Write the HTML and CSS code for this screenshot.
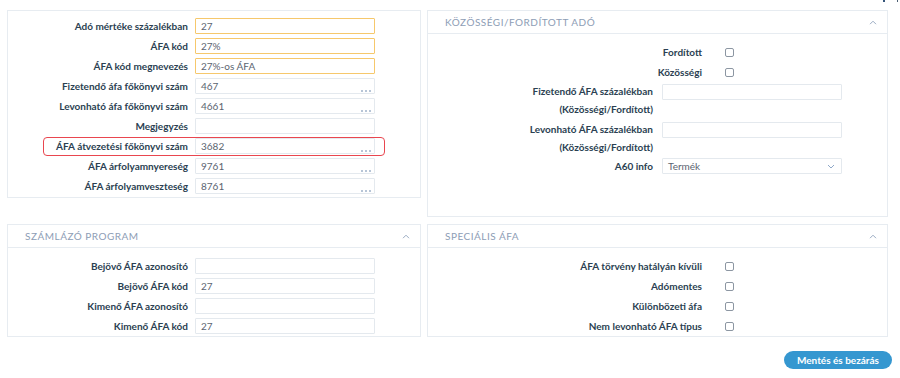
FILE: index.html
```html
<!DOCTYPE html>
<html lang="hu">
<head>
<meta charset="utf-8">
<title>ÁFA kód</title>
<link rel="stylesheet" href="styles.css">
</head>
<body>
<div class="corner"><span class="c1"></span><span class="c2"></span></div>
<div class="page">
  <div class="grid">
    <section class="panel panel-main">
      <div class="rows">
        <div class="row"><label class="lbl">Adó mértéke százalékban</label><div class="inp hl">27</div></div>
        <div class="row"><label class="lbl">ÁFA kód</label><div class="inp hl">27%</div></div>
        <div class="row"><label class="lbl">ÁFA kód megnevezés</label><div class="inp hl">27%-os ÁFA</div></div>
        <div class="row"><label class="lbl">Fizetendő áfa főkönyvi szám</label><div class="inp">467<span class="dots"><i></i><i></i><i></i></span></div></div>
        <div class="row"><label class="lbl">Levonható áfa főkönyvi szám</label><div class="inp">4661<span class="dots"><i></i><i></i><i></i></span></div></div>
        <div class="row"><label class="lbl">Megjegyzés</label><div class="inp"></div></div>
        <div class="row marked"><label class="lbl">ÁFA átvezetési főkönyvi szám</label><div class="inp">3682<span class="dots"><i></i><i></i><i></i></span></div></div>
        <div class="row"><label class="lbl">ÁFA árfolyamnyereség</label><div class="inp">9761<span class="dots"><i></i><i></i><i></i></span></div></div>
        <div class="row"><label class="lbl">ÁFA árfolyamveszteség</label><div class="inp">8761<span class="dots"><i></i><i></i><i></i></span></div></div>
      </div>
    </section>

    <section class="panel">
      <header class="phead"><span>Közösségi/fordított adó</span><svg class="caret" width="8" height="5" viewBox="0 0 8 5"><polyline points="1,4.2 4,1.2 7,4.2" fill="none" stroke="#9aabc2" stroke-width="1"/></svg></header>
      <div class="pbody pbody-kozos">
        <div class="crow"><span class="clbl">Fordított</span><span class="cb"></span></div>
        <div class="crow"><span class="clbl">Közösségi</span><span class="cb"></span></div>
        <div class="rrow"><span class="rlbl">Fizetendő ÁFA százalékban<br>(Közösségi/Fordított)</span><div class="inp inp-r"></div></div>
        <div class="rrow"><span class="rlbl">Levonható ÁFA százalékban<br>(Közösségi/Fordított)</span><div class="inp inp-r"></div></div>
        <div class="rrow"><span class="rlbl">A60 info</span><div class="inp inp-r sel">Termék<svg class="dd" width="8" height="5" viewBox="0 0 8 5"><polyline points="1,1 4,4 7,1" fill="none" stroke="#8fa8c8" stroke-width="1"/></svg></div></div>
      </div>
    </section>

    <section class="panel">
      <header class="phead"><span>Számlázó program</span><svg class="caret" width="8" height="5" viewBox="0 0 8 5"><polyline points="1,4.2 4,1.2 7,4.2" fill="none" stroke="#9aabc2" stroke-width="1"/></svg></header>
      <div class="pbody pbody-szamla">
        <div class="rows">
          <div class="row"><label class="lbl">Bejövő ÁFA azonosító</label><div class="inp"></div></div>
          <div class="row"><label class="lbl">Bejövő ÁFA kód</label><div class="inp">27</div></div>
          <div class="row"><label class="lbl">Kimenő ÁFA azonosító</label><div class="inp"></div></div>
          <div class="row"><label class="lbl">Kimenő ÁFA kód</label><div class="inp">27</div></div>
        </div>
      </div>
    </section>

    <section class="panel">
      <header class="phead"><span>Speciális ÁFA</span><svg class="caret" width="8" height="5" viewBox="0 0 8 5"><polyline points="1,4.2 4,1.2 7,4.2" fill="none" stroke="#9aabc2" stroke-width="1"/></svg></header>
      <div class="pbody pbody-spec">
        <div class="crow"><span class="clbl">ÁFA törvény hatályán kívüli</span><span class="cb"></span></div>
        <div class="crow"><span class="clbl">Adómentes</span><span class="cb"></span></div>
        <div class="crow"><span class="clbl">Különbözeti áfa</span><span class="cb"></span></div>
        <div class="crow"><span class="clbl">Nem levonható ÁFA típus</span><span class="cb"></span></div>
      </div>
    </section>
  </div>
  <div class="footer"><button class="btn">Mentés és bezárás</button></div>
</div>
</body>
</html>
```

FILE: styles.css
```css
* { box-sizing: border-box; }
html, body { margin: 0; padding: 0; background: #fff; }
body {
  font-family: Lato, "Open Sans", "Liberation Sans", sans-serif;
  font-size: 10px;
  color: #2b3f52;
  width: 900px;
  height: 378px;
  overflow: hidden;
  position: relative;
}
.corner { position: absolute; top: 0; right: 0; width: 20px; height: 2px; }
.corner .c1 { position: absolute; left: 3px; top: 0; width: 2px; height: 2px; background: #35557a; }
.corner .c2 { position: absolute; left: 17px; top: 0; width: 1px; height: 2px; background: #4a5d72; }

.page { padding: 10px 8px 0 7px; }
.grid {
  display: grid;
  grid-template-columns: 414px 461px;
  column-gap: 6px;
  row-gap: 7px;
  align-items: start;
}
.panel { border: 1px solid #e7ecf1; background: #fff; }
.panel-main { padding: 7px 0 3px; }

.rows { display: flex; flex-direction: column; gap: 4px; }
.row {
  display: grid;
  grid-template-columns: 180px 180px;
  column-gap: 7px;
  align-items: center;
  height: 16px;
  position: relative;
}
.lbl { text-align: right; font-weight: 700; white-space: nowrap; line-height: 16px; }
.inp {
  position: relative;
  height: 16px;
  border: 1px solid #e4e9ee;
  border-radius: 1px;
  padding: 0 5px;
  line-height: 14px;
  color: #5b6470;
  font-size: 10px;
  background: #fff;
}
.inp.hl { border-color: #f6c86c; }
.dots { position: absolute; right: 3px; bottom: 1px; display: flex; gap: 2px; }
.dots i { display: block; width: 2px; height: 2px; border-radius: 50%; background: #9fb2ca; }
.marked::before {
  content: "";
  position: absolute;
  left: 35px; right: 35px; top: -1px; bottom: -2px;
  border: 1.5px solid #e9464f;
  border-radius: 4px;
}

.phead {
  height: 23px;
  border-bottom: 1px solid #e7ecf1;
  display: flex;
  align-items: center;
  justify-content: space-between;
  padding: 0 10px 0 17px;
  text-transform: uppercase;
  letter-spacing: 0.5px;
  color: #8d9db5;
  font-size: 10px;
}
.caret { display: block; }

.pbody-kozos { padding: 8px 0 42px; }
.crow {
  display: grid;
  grid-template-columns: 274px 9px;
  column-gap: 23px;
  align-items: center;
  height: 20px;
}
.clbl { text-align: right; font-weight: 700; white-space: nowrap; }
.cb { width: 9px; height: 9px; border: 1px solid #8c96a2; border-radius: 2px; }

.rrow {
  display: grid;
  grid-template-columns: 225px 180px;
  column-gap: 9px;
  align-items: start;
}
.rrow + .rrow { margin-top: 2px; }
.rlbl { text-align: right; font-weight: 700; line-height: 18px; white-space: nowrap; }
.inp-r { margin-top: 2px; }
.rrow:last-child .rlbl { line-height: 16px; }
.rrow:last-child .inp-r { margin-top: 0; }
.sel { display: flex; align-items: center; justify-content: space-between; padding-right: 6px; }
.dd { display: block; }

.pbody-szamla { padding: 10px 0 2px; }
.pbody-spec { padding: 8px 0 0; }

.footer { display: flex; justify-content: flex-end; margin-top: 14px; }
.btn {
  width: 108px;
  height: 18px;
  border: 0;
  border-radius: 9px;
  background: #3597d0;
  color: #fff;
  font-family: Lato, "Open Sans", "Liberation Sans", sans-serif;
  font-weight: 700;
  font-size: 10px;
  padding: 0;
}
```
